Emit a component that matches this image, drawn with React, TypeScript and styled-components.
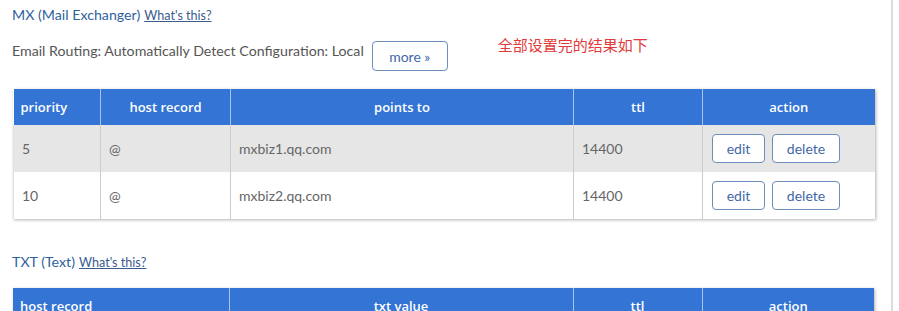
import styled, { createGlobalStyle } from 'styled-components';

const GlobalStyle = createGlobalStyle`
  html, body {
    margin: 0;
    padding: 0;
    background: #ffffff;
  }
  body {
    font-family: Lato, "Noto Sans", "Noto Sans CJK SC", sans-serif;
    color: #555555;
  }
`;

const Page = styled.div`
  display: flex;
  width: 899px;
`;

const Content = styled.div`
  width: 893px;
  box-sizing: border-box;
  padding: 5px 19px 0 13px;
  border-right: 2px solid #dcdcdc;
`;

const SectionTitle = styled.div`
  display: flex;
  align-items: baseline;
  gap: 4px;
  height: 20px;
  line-height: 20px;
  font-size: 14.2px;
  color: #2f5f9e;
  margin-left: -1px;
`;

const WhatLink = styled.a`
  font-size: 12.6px;
  color: #3b5b8e;
  text-decoration: underline;
  cursor: pointer;
`;

const RoutingRow = styled.div`
  display: flex;
  align-items: flex-start;
  margin-top: 16px;
  height: 30px;
`;

const RoutingText = styled.div`
  font-size: 14.2px;
  line-height: 20px;
  color: #555555;
  margin-left: -1px;
`;

const OutlineButton = styled.button<{ $w: number; $h: number }>`
  box-sizing: border-box;
  width: ${p => p.$w}px;
  height: ${p => p.$h}px;
  border: 1px solid #6d8dbd;
  border-radius: 4px;
  background: #ffffff;
  color: #3f67a8;
  font-family: Lato, sans-serif;
  font-size: 14px;
  padding: 0;
  cursor: pointer;
`;

const MoreButton = styled(OutlineButton)`
  margin-left: 8px;
`;

const Note = styled.div`
  margin-left: 50px;
  margin-top: -6px;
  font-size: 15px;
  line-height: 20px;
  color: #e03a3a;
  font-family: "Noto Sans CJK SC", sans-serif;
`;

const Table = styled.table`
  width: 861px;
  border-collapse: collapse;
  table-layout: fixed;
  box-shadow: 1px 1px 3px rgba(0, 0, 0, 0.3);
  margin-top: 18px;
`;

const HeadCell = styled.th<{ $left?: boolean }>`
  height: 36px;
  padding: 0 7px;
  background: #3474d4;
  color: #ffffff;
  font-family: "Open Sans", sans-serif;
  font-weight: 600;
  font-size: 13px;
  text-align: ${p => (p.$left ? 'left' : 'center')};
  border-left: 1px solid #a8c3ec;
  box-sizing: border-box;
  &:first-child {
    border-left: none;
  }
`;

const Row = styled.tr<{ $shaded?: boolean }>`
  background: ${p => (p.$shaded ? '#e6e6e6' : '#ffffff')};
`;

const Cell = styled.td`
  height: 47px;
  padding: 0 8px;
  font-size: 14px;
  color: #666666;
  border-left: 1px solid #cccccc;
  box-sizing: border-box;
  &:first-child {
    border-left: 1px solid #e0e0e0;
  }
`;

const ActionCell = styled(Cell)`
  padding: 0 9px;
`;

const Actions = styled.div`
  display: flex;
  gap: 7px;
`;

const TxtTitle = styled(SectionTitle)`
  margin-top: 33px;
`;

const TxtTable = styled(Table)`
  margin-top: 16px;
`;

const mxRows = [
  { priority: '5', host: '@', points: 'mxbiz1.qq.com', ttl: '14400' },
  { priority: '10', host: '@', points: 'mxbiz2.qq.com', ttl: '14400' },
];

const App = () => {
  return (
    <>
      <GlobalStyle />
      <Page>
        <Content>
          <SectionTitle>
            MX (Mail Exchanger) <WhatLink>What's this?</WhatLink>
          </SectionTitle>
          <RoutingRow>
            <RoutingText>Email Routing: Automatically Detect Configuration: Local</RoutingText>
            <MoreButton $w={76} $h={30}>more »</MoreButton>
            <Note>全部设置完的结果如下</Note>
          </RoutingRow>
          <Table>
            <colgroup>
              <col style={{ width: 87 }} />
              <col style={{ width: 130 }} />
              <col style={{ width: 343 }} />
              <col style={{ width: 129 }} />
              <col style={{ width: 172 }} />
            </colgroup>
            <thead>
              <tr>
                <HeadCell $left>priority</HeadCell>
                <HeadCell>host record</HeadCell>
                <HeadCell>points to</HeadCell>
                <HeadCell>ttl</HeadCell>
                <HeadCell>action</HeadCell>
              </tr>
            </thead>
            <tbody>
              {mxRows.map((r, i) => (
                <Row key={r.points} $shaded={i % 2 === 0}>
                  <Cell>{r.priority}</Cell>
                  <Cell>{r.host}</Cell>
                  <Cell>{r.points}</Cell>
                  <Cell>{r.ttl}</Cell>
                  <ActionCell>
                    <Actions>
                      <OutlineButton $w={53} $h={29}>edit</OutlineButton>
                      <OutlineButton $w={68} $h={29}>delete</OutlineButton>
                    </Actions>
                  </ActionCell>
                </Row>
              ))}
            </tbody>
          </Table>
          <TxtTitle>
            TXT (Text) <WhatLink>What's this?</WhatLink>
          </TxtTitle>
          <TxtTable>
            <colgroup>
              <col style={{ width: 216 }} />
              <col style={{ width: 344 }} />
              <col style={{ width: 129 }} />
              <col style={{ width: 172 }} />
            </colgroup>
            <thead>
              <tr>
                <HeadCell $left>host record</HeadCell>
                <HeadCell>txt value</HeadCell>
                <HeadCell>ttl</HeadCell>
                <HeadCell>action</HeadCell>
              </tr>
            </thead>
          </TxtTable>
        </Content>
      </Page>
    </>
  );
};

export default App;
